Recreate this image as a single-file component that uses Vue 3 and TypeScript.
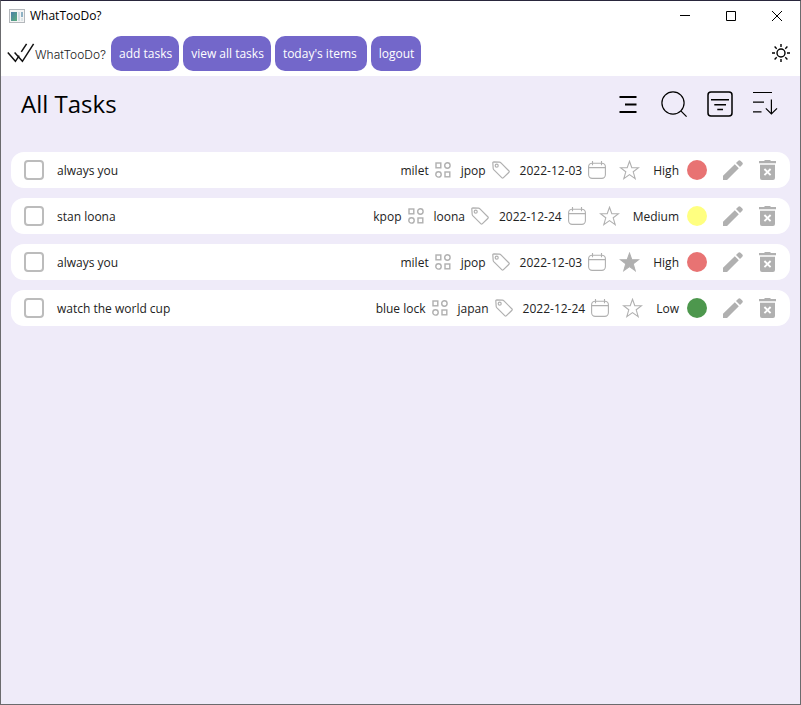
<script setup lang="ts">
import { ref } from 'vue'

type Priority = 'High' | 'Medium' | 'Low'

interface Task {
  id: number
  title: string
  category: string
  tag: string
  due: string
  starred: boolean
  done: boolean
  priority: Priority
}

const navItems = [
  { label: 'add tasks', wide: false },
  { label: 'view all tasks', wide: false },
  { label: "today's items", wide: true },
  { label: 'logout', wide: false },
]

const tasks = ref<Task[]>([
  { id: 1, title: 'always you', category: 'milet', tag: 'jpop', due: '2022-12-03', starred: false, done: false, priority: 'High' },
  { id: 2, title: 'stan loona', category: 'kpop', tag: 'loona', due: '2022-12-24', starred: false, done: false, priority: 'Medium' },
  { id: 3, title: 'always you', category: 'milet', tag: 'jpop', due: '2022-12-03', starred: true, done: false, priority: 'High' },
  { id: 4, title: 'watch the world cup', category: 'blue lock', tag: 'japan', due: '2022-12-24', starred: false, done: false, priority: 'Low' },
])

function removeTask(id: number): void {
  tasks.value = tasks.value.filter((task) => task.id !== id)
}
</script>

<template>
  <div class="window">
    <div class="titlebar">
      <svg class="app-icon" width="16" height="14" viewBox="0 0 16 14" aria-hidden="true">
        <defs>
          <linearGradient id="pane" x1="0" y1="0" x2="1" y2="1">
            <stop offset="0" stop-color="#4a7fa8" />
            <stop offset="1" stop-color="#5cae7c" />
          </linearGradient>
        </defs>
        <rect x="0.5" y="0.5" width="15" height="13" fill="#f4f4f4" stroke="#b4b8bc" />
        <rect x="2" y="3" width="6" height="9" fill="url(#pane)" />
        <rect x="9" y="3" width="2" height="9" fill="#d3dde4" />
        <rect x="12" y="3" width="2" height="5" fill="#8fb2c4" />
        <rect x="12" y="9" width="2" height="3" fill="#dce4e6" />
      </svg>
      <span class="window-title">WhatTooDo?</span>
      <div class="window-controls">
        <button type="button" class="control" aria-label="Minimize">
          <svg width="10" height="10" viewBox="0 0 10 10"><path d="M0 4.5H10" /></svg>
        </button>
        <button type="button" class="control" aria-label="Maximize">
          <svg width="10" height="10" viewBox="0 0 10 10"><path d="M0.5 0.5H9.5V9.5H0.5Z" /></svg>
        </button>
        <button type="button" class="control" aria-label="Close">
          <svg width="10" height="10" viewBox="0 0 10 10"><path d="M0 0L10 10M10 0L0 10" /></svg>
        </button>
      </div>
    </div>

    <header class="navbar">
      <div class="brand">
        <svg width="28" height="20" viewBox="0 0 28 20" aria-hidden="true">
          <path d="M0.8 9.6L8.4 18.3L12.2 12.6M7.6 9.6L15.4 18.3L26.6 0.8M14.3 8.8L19.6 0.8" fill="none" stroke="#111" stroke-width="1.5" />
        </svg>
        <span class="brand-name">WhatTooDo?</span>
      </div>
      <nav class="nav">
        <button v-for="item in navItems" :key="item.label" type="button" class="nav-button" :class="{ wide: item.wide }">{{ item.label }}</button>
      </nav>
      <button type="button" class="icon-button theme" aria-label="Toggle theme">
        <svg width="18" height="18" viewBox="0 0 18 18" fill="none" stroke="#000" stroke-width="1.4">
          <circle cx="9" cy="9" r="4" />
          <path d="M9 0V3M9 15V18M0 9H3M15 9H18M2.6 2.6L4.7 4.7M13.3 13.3L15.4 15.4M2.6 15.4L4.7 13.3M13.3 4.7L15.4 2.6" />
        </svg>
      </button>
    </header>

    <main class="content">
      <div class="heading">
        <h1>All Tasks</h1>
        <div class="tools">
          <button type="button" class="icon-button" aria-label="Menu">
            <svg width="26" height="26" viewBox="0 0 26 26" fill="none" stroke="#000" stroke-width="2">
              <path d="M4.5 6H21.5M10 13.5H21.5M4.5 21H21.5" />
            </svg>
          </button>
          <button type="button" class="icon-button" aria-label="Search">
            <svg width="26" height="26" viewBox="0 0 26 26" fill="none" stroke="#000" stroke-width="1.2">
              <circle cx="12" cy="12" r="11.1" />
              <path d="M19.8 19.8L25.6 25.6" />
            </svg>
          </button>
          <button type="button" class="icon-button" aria-label="Filter">
            <svg width="26" height="26" viewBox="0 0 26 26" fill="none" stroke="#000" stroke-width="1.5">
              <rect x="1" y="1" width="24" height="24" rx="3" />
              <path d="M4 8.7H22M7.3 13.7H19M10.3 18.6H16" />
            </svg>
          </button>
          <button type="button" class="icon-button" aria-label="Sort">
            <svg width="26" height="26" viewBox="0 0 26 26" fill="none" stroke="#000" stroke-width="1.2">
              <path d="M0 1.5H19M0 11.2H11M0 20.8H8.5M18.4 8.5V23M12.8 17.4L18.4 23L24 17.4" />
            </svg>
          </button>
        </div>
      </div>

      <ul class="tasks">
        <li v-for="task in tasks" :key="task.id" class="task">
          <input :id="`task-${task.id}`" v-model="task.done" type="checkbox" class="check" />
          <label :for="`task-${task.id}`" class="task-title text">{{ task.title }}</label>
          <div class="details">
            <span class="field">
              <span class="text">{{ task.category }}</span>
              <svg width="16" height="16" viewBox="0 0 16 16" fill="none" stroke="#b0b0b0" stroke-width="1.4">
                <rect x="1" y="1" width="4.8" height="4.8" />
                <circle cx="12.4" cy="3.5" r="2.7" />
                <circle cx="3.5" cy="12.4" r="2.7" />
                <rect x="10" y="10" width="4.8" height="4.8" />
              </svg>
            </span>
            <span class="field">
              <span class="text">{{ task.tag }}</span>
              <svg width="18" height="18" viewBox="0 0 18 18" fill="none" stroke="#b0b0b0" stroke-width="1.2" stroke-linejoin="round">
                <path d="M0.8 1.8Q0.8 0.8 1.8 0.8L7.6 1.2Q8.2 1.3 8.7 1.7L17 10Q17.5 10.6 17 11.2L11.2 16.9Q10.6 17.4 10 16.9L1.7 8.6Q1.3 8.1 1.2 7.5Z" />
                <circle cx="4.7" cy="4.7" r="1.5" />
              </svg>
            </span>
            <span class="field">
              <time class="text" :datetime="task.due">{{ task.due }}</time>
              <svg width="18" height="18" viewBox="0 0 18 18" fill="none" stroke="#b0b0b0" stroke-width="1.1">
                <rect x="0.6" y="2.2" width="16.8" height="15.2" rx="3.6" />
                <path d="M0.6 6.6H17.4M4.5 0V4.2M13.5 0V4.2" />
              </svg>
            </span>
            <button type="button" class="icon-button" :aria-label="`Star ${task.title}`" :aria-pressed="task.starred" @click="task.starred = !task.starred">
              <svg width="21" height="20" viewBox="0 0 21 20" :fill="task.starred ? '#b0b0b0' : 'none'" stroke="#b0b0b0" stroke-width="1.1">
                <path d="M10.5 1.3L12.8 7.7H19.6L14.2 11.8L16.2 18.6L10.5 14.6L4.8 18.6L6.8 11.8L1.4 7.7H8.2Z" />
              </svg>
            </button>
            <span class="field priority">
              <span class="text">{{ task.priority }}</span>
              <span class="dot" :class="task.priority.toLowerCase()"></span>
            </span>
          </div>
          <div class="actions">
            <button type="button" class="icon-button" :aria-label="`Edit ${task.title}`">
              <svg width="20" height="20" viewBox="0 0 20 20" fill="#b0b0b0">
                <path d="M0 20V15.8L11.8 4.2L15.8 8.2L4 20ZM13 3L15.3 0.7Q16.4-0.3 17.5 0.7L19.3 2.5Q20.3 3.6 19.3 4.7L17 7Z" />
              </svg>
            </button>
            <button type="button" class="icon-button" :aria-label="`Delete ${task.title}`" @click="removeTask(task.id)">
              <svg width="17" height="20" viewBox="0 0 17 20" fill="#b0b0b0">
                <path d="M0 1H5L6 0H11L12 1H17V3.3H0ZM1 4.7H16V18Q16 20 14 20H3Q1 20 1 18Z" />
                <path d="M5.4 9L11.6 15.2M11.6 9L5.4 15.2" fill="none" stroke="#fff" stroke-width="1.9" />
              </svg>
            </button>
          </div>
        </li>
      </ul>
    </main>
  </div>
</template>

<style>
body {
  margin: 0;
}
</style>

<style scoped>
.window {
  box-sizing: border-box;
  display: flex;
  flex-direction: column;
  min-height: 100vh;
  border: 1px solid #6b6b6e;
  border-top-color: #29263c;
  background: #fff;
  color: #222;
  font: 12px/18px 'Open Sans', 'Noto Sans', sans-serif;
}

button {
  margin: 0;
  padding: 0;
  border: 0;
  background: none;
  color: inherit;
  font: inherit;
  cursor: pointer;
}

svg {
  display: block;
  flex: none;
}

.titlebar {
  display: flex;
  align-items: center;
  height: 29px;
  padding-left: 8px;
}

.window-title {
  margin-left: 5px;
  color: #000;
}

.window-controls {
  display: flex;
  align-self: stretch;
  margin-left: auto;
}

.control {
  display: grid;
  place-items: center;
  width: 46px;
}

.control path {
  fill: none;
  stroke: #000;
  stroke-width: 1;
}

.navbar {
  display: flex;
  align-items: center;
  height: 46px;
  padding: 0 10px 0 6px;
}

.brand {
  display: flex;
  align-items: center;
  width: 104px;
}

.brand-name {
  padding-top: 4px;
  color: #222;
  font: 300 12px/18px Inter, Lato, sans-serif;
}

.nav {
  display: flex;
  gap: 4px;
}

.nav-button {
  height: 35px;
  padding: 2px 7px 0 8px;
  border-radius: 10px;
  background: #7367ca;
  color: #fff;
  white-space: nowrap;
}

.nav-button.wide {
  padding-right: 10px;
}

.theme {
  margin-left: auto;
}

.content {
  flex: 1;
  padding: 8px 10px;
  background: #efebf9;
}

.heading {
  display: flex;
  align-items: center;
  justify-content: space-between;
  height: 40px;
  padding: 0 11px 0 10px;
}

h1 {
  margin: 0;
  color: #000;
  font-size: 24px;
  font-weight: 400;
  line-height: 40px;
}

.tools {
  display: flex;
  gap: 20px;
}

.tasks {
  display: flex;
  flex-direction: column;
  gap: 10px;
  margin: 28px 0 0;
  padding: 0;
  list-style: none;
}

.task {
  display: flex;
  align-items: center;
  height: 36px;
  padding: 0 14px 0 13px;
  border-radius: 13px;
  background: #fff;
}

.check {
  appearance: none;
  box-sizing: border-box;
  width: 20px;
  height: 20px;
  margin: 0;
  border: 2px solid #bcbcbc;
  border-radius: 4px;
  background: #fff;
}

.check:checked {
  background: #7367ca;
}

.text {
  padding-top: 2px;
}

.task-title {
  margin-left: 13px;
}

.details {
  display: flex;
  align-items: center;
  gap: 10px;
  margin-left: auto;
}

.field {
  display: flex;
  align-items: center;
  gap: 6px;
  white-space: nowrap;
}

.priority {
  gap: 8px;
}

.details .icon-button {
  margin: 0 3px;
}

.dot {
  width: 20px;
  height: 20px;
  border-radius: 50%;
}

.high {
  background: #e87373;
}

.medium {
  background: #ffff80;
}

.low {
  background: #4d974d;
}

.actions {
  display: flex;
  align-items: center;
  gap: 16px;
  margin-left: 16px;
}
</style>
